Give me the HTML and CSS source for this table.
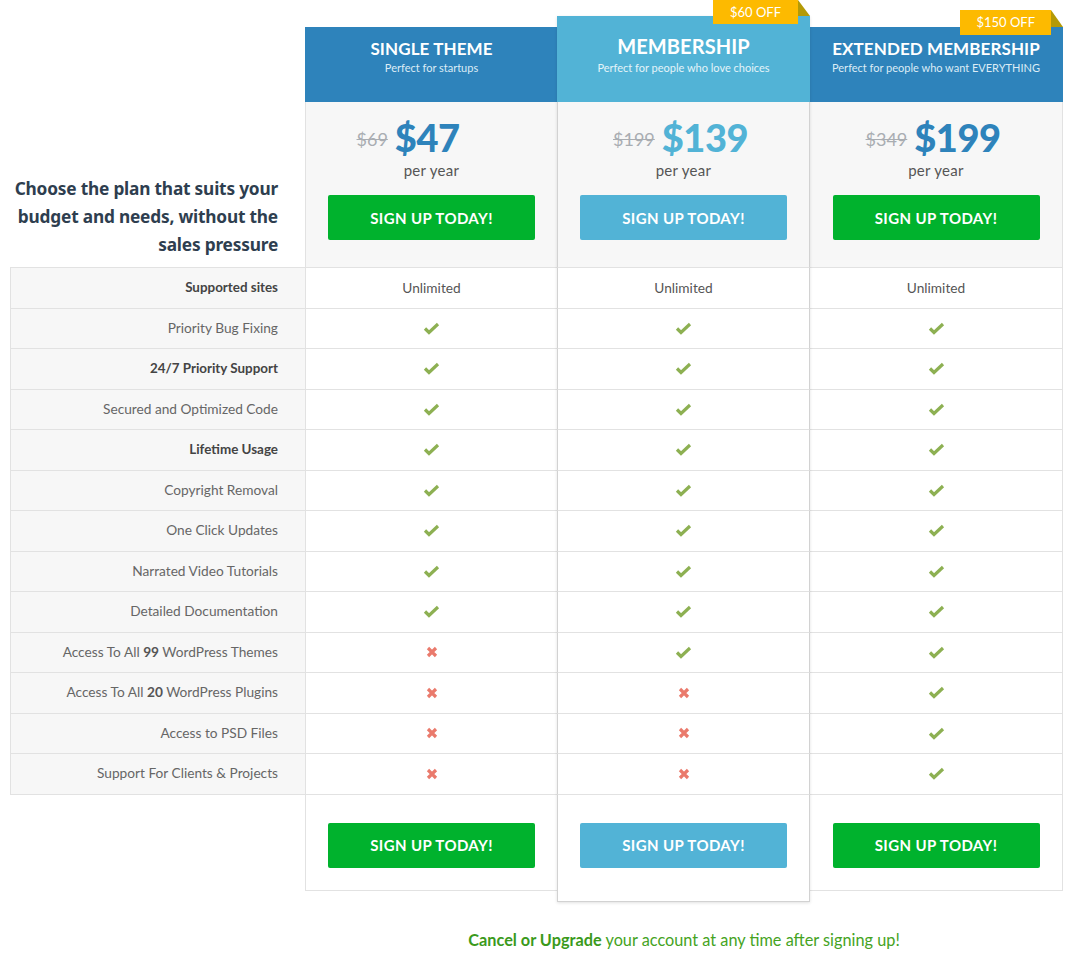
FILE: index.html
```html
<!DOCTYPE html>
<html>
<head>
<meta charset="utf-8">
<link rel="stylesheet" href="styles.css">
</head>
<body>
<div class="pricing">
  <div class="labels">
    <div class="intro">
      <h2>Choose the plan that suits your<br>budget and needs, without the<br>sales pressure</h2>
    </div>
    <ul class="label-list">
      <li class="strong">Supported sites</li>
      <li>Priority Bug Fixing</li>
      <li class="strong">24/7 Priority Support</li>
      <li>Secured and Optimized Code</li>
      <li class="strong">Lifetime Usage</li>
      <li>Copyright Removal</li>
      <li>One Click Updates</li>
      <li>Narrated Video Tutorials</li>
      <li>Detailed Documentation</li>
      <li>Access To All <b>99</b> WordPress Themes</li>
      <li>Access To All <b>20</b> WordPress Plugins</li>
      <li>Access to PSD Files</li>
      <li>Support For Clients &amp; Projects</li>
    </ul>
  </div>

  <div class="plan">
    <div class="plan-head">
      <h3>SINGLE THEME</h3>
      <p>Perfect for startups</p>
    </div>
    <div class="plan-price">
      <div class="price-line price-line--short"><s class="old">$69</s><span class="new">$47</span></div>
      <div class="per">per year</div>
      <a class="btn" href="#">SIGN UP TODAY!</a>
    </div>
    <ul class="plan-features">
      <li>Unlimited</li>
      <li><svg class="ico" width="17" height="13" viewBox="0 0 17 13"><polyline points="2,6.5 6,10.5 15,2" class="chk"/></svg></li>
      <li><svg class="ico" width="17" height="13" viewBox="0 0 17 13"><polyline points="2,6.5 6,10.5 15,2" class="chk"/></svg></li>
      <li><svg class="ico" width="17" height="13" viewBox="0 0 17 13"><polyline points="2,6.5 6,10.5 15,2" class="chk"/></svg></li>
      <li><svg class="ico" width="17" height="13" viewBox="0 0 17 13"><polyline points="2,6.5 6,10.5 15,2" class="chk"/></svg></li>
      <li><svg class="ico" width="17" height="13" viewBox="0 0 17 13"><polyline points="2,6.5 6,10.5 15,2" class="chk"/></svg></li>
      <li><svg class="ico" width="17" height="13" viewBox="0 0 17 13"><polyline points="2,6.5 6,10.5 15,2" class="chk"/></svg></li>
      <li><svg class="ico" width="17" height="13" viewBox="0 0 17 13"><polyline points="2,6.5 6,10.5 15,2" class="chk"/></svg></li>
      <li><svg class="ico" width="17" height="13" viewBox="0 0 17 13"><polyline points="2,6.5 6,10.5 15,2" class="chk"/></svg></li>
      <li><svg class="ico" width="12" height="12" viewBox="0 0 12 12"><path d="M2 2L10 10M10 2L2 10" class="x"/></svg></li>
      <li><svg class="ico" width="12" height="12" viewBox="0 0 12 12"><path d="M2 2L10 10M10 2L2 10" class="x"/></svg></li>
      <li><svg class="ico" width="12" height="12" viewBox="0 0 12 12"><path d="M2 2L10 10M10 2L2 10" class="x"/></svg></li>
      <li><svg class="ico" width="12" height="12" viewBox="0 0 12 12"><path d="M2 2L10 10M10 2L2 10" class="x"/></svg></li>
    </ul>
    <div class="plan-foot">
      <a class="btn" href="#">SIGN UP TODAY!</a>
    </div>
  </div>

  <div class="plan plan--featured">
    <span class="badge">$60 OFF</span>
    <div class="plan-head">
      <h3>MEMBERSHIP</h3>
      <p>Perfect for people who love choices</p>
    </div>
    <div class="plan-price">
      <div class="price-line"><s class="old">$199</s><span class="new">$139</span></div>
      <div class="per">per year</div>
      <a class="btn" href="#">SIGN UP TODAY!</a>
    </div>
    <ul class="plan-features">
      <li>Unlimited</li>
      <li><svg class="ico" width="17" height="13" viewBox="0 0 17 13"><polyline points="2,6.5 6,10.5 15,2" class="chk"/></svg></li>
      <li><svg class="ico" width="17" height="13" viewBox="0 0 17 13"><polyline points="2,6.5 6,10.5 15,2" class="chk"/></svg></li>
      <li><svg class="ico" width="17" height="13" viewBox="0 0 17 13"><polyline points="2,6.5 6,10.5 15,2" class="chk"/></svg></li>
      <li><svg class="ico" width="17" height="13" viewBox="0 0 17 13"><polyline points="2,6.5 6,10.5 15,2" class="chk"/></svg></li>
      <li><svg class="ico" width="17" height="13" viewBox="0 0 17 13"><polyline points="2,6.5 6,10.5 15,2" class="chk"/></svg></li>
      <li><svg class="ico" width="17" height="13" viewBox="0 0 17 13"><polyline points="2,6.5 6,10.5 15,2" class="chk"/></svg></li>
      <li><svg class="ico" width="17" height="13" viewBox="0 0 17 13"><polyline points="2,6.5 6,10.5 15,2" class="chk"/></svg></li>
      <li><svg class="ico" width="17" height="13" viewBox="0 0 17 13"><polyline points="2,6.5 6,10.5 15,2" class="chk"/></svg></li>
      <li><svg class="ico" width="17" height="13" viewBox="0 0 17 13"><polyline points="2,6.5 6,10.5 15,2" class="chk"/></svg></li>
      <li><svg class="ico" width="12" height="12" viewBox="0 0 12 12"><path d="M2 2L10 10M10 2L2 10" class="x"/></svg></li>
      <li><svg class="ico" width="12" height="12" viewBox="0 0 12 12"><path d="M2 2L10 10M10 2L2 10" class="x"/></svg></li>
      <li><svg class="ico" width="12" height="12" viewBox="0 0 12 12"><path d="M2 2L10 10M10 2L2 10" class="x"/></svg></li>
    </ul>
    <div class="plan-foot">
      <a class="btn" href="#">SIGN UP TODAY!</a>
    </div>
  </div>

  <div class="plan plan--last">
    <span class="badge">$150 OFF</span>
    <div class="plan-head">
      <h3>EXTENDED MEMBERSHIP</h3>
      <p>Perfect for people who want EVERYTHING</p>
    </div>
    <div class="plan-price">
      <div class="price-line"><s class="old">$349</s><span class="new">$199</span></div>
      <div class="per">per year</div>
      <a class="btn" href="#">SIGN UP TODAY!</a>
    </div>
    <ul class="plan-features">
      <li>Unlimited</li>
      <li><svg class="ico" width="17" height="13" viewBox="0 0 17 13"><polyline points="2,6.5 6,10.5 15,2" class="chk"/></svg></li>
      <li><svg class="ico" width="17" height="13" viewBox="0 0 17 13"><polyline points="2,6.5 6,10.5 15,2" class="chk"/></svg></li>
      <li><svg class="ico" width="17" height="13" viewBox="0 0 17 13"><polyline points="2,6.5 6,10.5 15,2" class="chk"/></svg></li>
      <li><svg class="ico" width="17" height="13" viewBox="0 0 17 13"><polyline points="2,6.5 6,10.5 15,2" class="chk"/></svg></li>
      <li><svg class="ico" width="17" height="13" viewBox="0 0 17 13"><polyline points="2,6.5 6,10.5 15,2" class="chk"/></svg></li>
      <li><svg class="ico" width="17" height="13" viewBox="0 0 17 13"><polyline points="2,6.5 6,10.5 15,2" class="chk"/></svg></li>
      <li><svg class="ico" width="17" height="13" viewBox="0 0 17 13"><polyline points="2,6.5 6,10.5 15,2" class="chk"/></svg></li>
      <li><svg class="ico" width="17" height="13" viewBox="0 0 17 13"><polyline points="2,6.5 6,10.5 15,2" class="chk"/></svg></li>
      <li><svg class="ico" width="17" height="13" viewBox="0 0 17 13"><polyline points="2,6.5 6,10.5 15,2" class="chk"/></svg></li>
      <li><svg class="ico" width="17" height="13" viewBox="0 0 17 13"><polyline points="2,6.5 6,10.5 15,2" class="chk"/></svg></li>
      <li><svg class="ico" width="17" height="13" viewBox="0 0 17 13"><polyline points="2,6.5 6,10.5 15,2" class="chk"/></svg></li>
      <li><svg class="ico" width="17" height="13" viewBox="0 0 17 13"><polyline points="2,6.5 6,10.5 15,2" class="chk"/></svg></li>
    </ul>
    <div class="plan-foot">
      <a class="btn" href="#">SIGN UP TODAY!</a>
    </div>
  </div>
</div>

<p class="note"><b>Cancel or Upgrade</b> your account at any time after signing up!</p>
</body>
</html>
```

FILE: styles.css
```css
* { box-sizing: border-box; }

body {
  margin: 0;
  background: #fff;
  font-family: "Lato", "Liberation Sans", sans-serif;
  color: #555;
}

.pricing {
  display: flex;
  align-items: flex-start;
  padding: 16px 0 0 10px;
}

/* ---------- labels column ---------- */
.labels {
  width: 295px;
  flex: none;
}

.intro {
  height: 251px;
  display: flex;
  align-items: flex-end;
  justify-content: flex-end;
  padding: 0 27px 8px 0;
}

.intro h2 {
  margin: 0;
  text-align: right;
  font-family: "Noto Sans", "Lato", sans-serif;
  font-weight: 700;
  font-size: 17.3px;
  line-height: 28px;
  color: #2e3e4f;
  letter-spacing: -0.2px;
}

.label-list {
  list-style: none;
  margin: 0;
  padding: 0;
  background: #f7f7f7;
  border-top: 1px solid #e2e2e2;
  border-left: 1px solid #e2e2e2;
}

.label-list li {
  height: 40.5px;
  border-bottom: 1px solid #e2e2e2;
  text-align: right;
  line-height: 38px;
  padding-right: 27px;
  font-size: 13.7px;
  color: #666;
  white-space: nowrap;
}

.label-list li.strong {
  color: #444;
  font-weight: 700;
  font-size: 13.4px;
}

.label-list li b {
  font-weight: 700;
  color: #555;
}

/* ---------- plans ---------- */
.plan {
  width: 253px;
  flex: none;
  margin-top: 11px;
  position: relative;
}

.plan--featured {
  margin-top: 0;
  margin-left: -1px;
  z-index: 2;
  box-shadow: 0 1px 3px rgba(0, 0, 0, 0.12);
}

.plan--last {
  width: 254px;
  margin-left: -1px;
}

.plan-head {
  height: 75px;
  background: #2e83bb;
  color: #fff;
  text-align: center;
  padding-top: 11px;
}

.plan--featured .plan-head {
  height: 86px;
  background: #52b3d6;
  padding-top: 18px;
}

.plan-head h3 {
  margin: 0;
  font-size: 17px;
  line-height: 22px;
  font-weight: 700;
  letter-spacing: 0.1px;
}

.plan--featured .plan-head h3 {
  font-size: 20px;
  line-height: 24px;
}

.plan-head p {
  margin: 1px 0 0;
  font-size: 11px;
  line-height: 14px;
  color: #dcecf6;
}

.plan--featured .plan-head p {
  margin-top: 3px;
  color: #e4f3f9;
}

.plan-price,
.plan-features li,
.plan-foot {
  border-left: 1px solid #e2e2e2;
  border-right: 1px solid #e2e2e2;
}

.plan--featured .plan-price,
.plan--featured .plan-features li,
.plan--featured .plan-foot {
  border-left-color: #d2d2d2;
  border-right-color: #d2d2d2;
}

.plan-price {
  height: 166px;
  background: #f7f7f7;
  border-bottom: 1px solid #e2e2e2;
  text-align: center;
  padding-top: 15px;
}

.price-line {
  display: flex;
  justify-content: center;
  align-items: center;
  height: 40px;
  gap: 7px;
  padding-right: 6px;
}

.price-line--short {
  padding-right: 47px;
}

.old {
  font-size: 18px;
  color: #a9adb2;
  text-decoration: line-through;
  margin-top: 3px;
}

.new {
  font-size: 38px;
  font-weight: 900;
  color: #2e83bb;
  letter-spacing: -0.5px;
}

.plan--featured .new {
  color: #52b3d6;
}

.per {
  margin-top: 3px;
  font-size: 15px;
  line-height: 20px;
  color: #555;
  letter-spacing: 0.3px;
}

.btn {
  display: flex;
  align-items: center;
  justify-content: center;
  width: 207px;
  height: 45px;
  margin: 15px auto 0;
  background: #00b22d;
  color: #fff;
  border-radius: 2px;
  text-decoration: none;
  font-size: 15px;
  font-weight: 700;
  letter-spacing: 0.4px;
}

.plan--featured .btn {
  background: #52b3d6;
}

.plan-features {
  list-style: none;
  margin: 0;
  padding: 0;
  background: #fff;
}

.plan-features li {
  height: 40.5px;
  border-bottom: 1px solid #e2e2e2;
  display: flex;
  align-items: center;
  justify-content: center;
  font-size: 13.7px;
  color: #555;
}

.ico { display: block; }

.chk {
  fill: none;
  stroke: #8db052;
  stroke-width: 3.2;
  stroke-linecap: butt;
  stroke-linejoin: miter;
}

.x {
  fill: none;
  stroke: #ea7a6c;
  stroke-width: 3.2;
}

.plan-foot {
  height: 96px;
  padding-top: 28px;
  border-bottom: 1px solid #e2e2e2;
  background: #fff;
}

.plan--featured .plan-foot {
  height: 107px;
  border-bottom-color: #d2d2d2;
}

.plan-foot .btn {
  margin-top: 0;
}

/* ---------- badge ---------- */
.badge {
  position: absolute;
  top: -16px;
  right: 12px;
  height: 24px;
  padding: 0 17px;
  background: #fdba00;
  color: #fff;
  font-size: 13px;
  line-height: 24px;
  z-index: 3;
}

.plan--last .badge {
  top: -17px;
  height: 25px;
  line-height: 25px;
  right: 12px;
  padding: 0 16px;
}

.badge::after {
  content: "";
  position: absolute;
  left: 100%;
  top: 0;
  width: 0;
  height: 0;
  border-bottom: 16px solid #b49a06;
  border-right: 12px solid transparent;
}

.plan--last .badge::after {
  border-bottom-width: 17px;
}

/* ---------- note ---------- */
.note {
  margin: 28px 0 0 305px;
  width: 758px;
  text-align: center;
  font-size: 16.3px;
  line-height: 20px;
  color: #45a323;
}

.note b {
  color: #3b9a1c;
  font-weight: 700;
}
```
